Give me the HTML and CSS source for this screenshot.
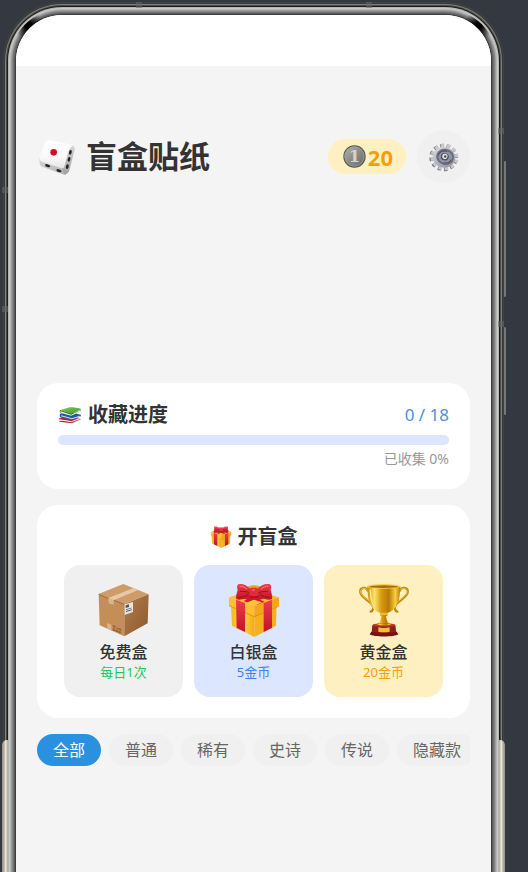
FILE: index.html
```html
<!DOCTYPE html>
<html lang="zh-CN">
<head>
<meta charset="utf-8">
<meta name="viewport" content="width=device-width, initial-scale=1">
<title>盲盒贴纸</title>
<link rel="stylesheet" href="styles.css">
</head>
<body>
<svg class="defs" aria-hidden="true">
  <defs>
    <linearGradient id="gold" x1="0" x2="1" y1="0" y2="0">
      <stop offset="0" stop-color="#f6b51c"/><stop offset=".5" stop-color="#ffd84a"/><stop offset="1" stop-color="#f3a915"/>
    </linearGradient>
    <linearGradient id="cup" x1="0" x2="1" y1="0" y2="0">
      <stop offset="0" stop-color="#c98a09"/><stop offset=".22" stop-color="#ffe36a"/><stop offset=".42" stop-color="#d99a12"/><stop offset=".65" stop-color="#b97a08"/><stop offset=".85" stop-color="#f9cf3d"/><stop offset="1" stop-color="#b87905"/>
    </linearGradient>
    <linearGradient id="red" x1="0" x2="0" y1="0" y2="1">
      <stop offset="0" stop-color="#ee3d4a"/><stop offset="1" stop-color="#c11426"/>
    </linearGradient>
    <linearGradient id="coin" x1="0" x2="1" y1="0" y2="1">
      <stop offset="0" stop-color="#b4b5b0"/><stop offset=".5" stop-color="#8a8b87"/><stop offset="1" stop-color="#6c6d69"/>
    </linearGradient>
    <linearGradient id="steel" x1="0" x2="1" y1="0" y2="1">
      <stop offset="0" stop-color="#dcdce2"/><stop offset="1" stop-color="#90909c"/>
    </linearGradient>
    <linearGradient id="face" x1="0" x2="0" y1="0" y2="1">
      <stop offset="0" stop-color="#fff"/><stop offset=".6" stop-color="#fafafa"/><stop offset="1" stop-color="#e6e6e6"/>
    </linearGradient>
    <linearGradient id="side" x1="0" x2="0" y1="0" y2="1">
      <stop offset="0" stop-color="#d4d4d4"/><stop offset="1" stop-color="#a0a0a0"/>
    </linearGradient>
    <linearGradient id="under" x1="0" x2="1" y1="0" y2="0">
      <stop offset="0" stop-color="#d0d0d0"/><stop offset="1" stop-color="#b4b4b4"/>
    </linearGradient>
    <linearGradient id="carton" x1="0" x2="1" y1="0" y2="1">
      <stop offset="0" stop-color="#b37c4a"/><stop offset="1" stop-color="#8b5a2f"/>
    </linearGradient>
    <linearGradient id="cover" x1="0" x2="1" y1="0" y2="1">
      <stop offset="0" stop-color="#8ccc5b"/><stop offset="1" stop-color="#31912e"/>
    </linearGradient>
    <symbol id="gift" viewBox="114 204 156 162">
      <ellipse cx="192" cy="220" rx="22" ry="9" fill="#e5a51b"/>
      <path fill="#f9bb2e" d="M118 247 190 225 266 247 194 275Z"/>
      <path fill="#ce1729" d="m140 240 20-7 64 27-22 9Zm77-6 23 8-58 24-21-8Z"/>
      <path fill="#ffc536" d="m169 263 22-9 25 8-23 10Z"/>
      <path fill="url(#gold)" d="m123 269 70 26v71l-67-34Z"/>
      <path fill="#f5b01d" d="m260 269-67 26v71l65-34Z"/>
      <path fill="#ffbf2d" d="m117 247 76 27v31l-76-32Z"/>
      <path fill="#f5a51d" d="m267 247-74 27v31l74-32Z"/>
      <path fill="url(#red)" d="m138 254 27 10v87l-25-12Zm108 0-25 10v87l25-13Z"/>
      <path fill="none" stroke="#cc8615" stroke-width="2" d="m118 273 20 8m28 12 27 12 28-12m25-10 20-9"/>
      <path fill="#b80d25" d="m176 236 16-5 16 5-3 12h-24Z"/>
      <path fill="url(#red)" d="M181 222c-12-13-25-17-35-14-6 2-5 10-3 17-3 10-7 23-3 28 11 3 29-1 42-12Z"/>
      <path fill="url(#red)" d="M202 222c12-13 25-17 36-14 7 2 6 10 4 17 3 10 7 23 3 28-12 3-30-1-43-12Z"/>
      <path fill="none" stroke="#98101f" stroke-width="3" d="M150 229c11 0 20 1 29 4m55-4c-11 0-20 1-29 4M145 247c10 0 21-3 31-9m64 9c-10 0-21-3-31-9"/>
      <rect x="178" y="218" width="27" height="26" rx="9" fill="#e02d3d"/>
      <path fill="none" stroke="#ff7b80" stroke-width="3" d="M149 214c8-1 16 3 22 8m64-8c-8-1-16 3-22 8m-27 3h9"/>
    </symbol>
  </defs>
</svg>

<div class="phone">
  <i class="seam seam-top-a"></i><i class="seam seam-top-b"></i>
  <i class="seam seam-left-a"></i><i class="seam seam-left-b"></i>
  <i class="seam seam-right-a"></i><i class="seam seam-right-b"></i>
  <i class="key key-volume"></i><i class="key key-power"></i>
  <i class="trim trim-left"></i><i class="trim trim-right"></i>

  <div class="screen">
    <div class="status-bar"></div>
    <main class="app">
      <header class="header">
        <h1 class="brand">
          <svg class="icon-dice" viewBox="27 41 108 108" aria-hidden="true">
            <path fill="url(#under)" d="M28 98q0 14 2 20 3 6 10 8l54 19q9 4 14 2l2-34Z"/>
            <path fill="url(#side)" d="M106 66q10-5 22-5 8 2 6 12l-15 59q-3 13-14 16-8-4-6-20Z"/>
            <path fill="url(#face)" d="M58 44q-9-2-12 7L29 96q-3 10 6 13l57 19q10 3 12-7l11-42q2-9 12-16-5-5-14-7Z"/>
            <circle cx="71" cy="81" r="10" fill="#cf1027"/>
            <g fill="#242424"><ellipse cx="53" cy="121" rx="8" ry="4" transform="rotate(17 53 121)"/><ellipse cx="87" cy="136" rx="8" ry="4" transform="rotate(17 87 136)"/><ellipse cx="121" cy="81" rx="4" ry="7" transform="rotate(15 121 81)"/><ellipse cx="117" cy="102" rx="4" ry="7" transform="rotate(15 117 102)"/><ellipse cx="112" cy="124" rx="4" ry="7" transform="rotate(15 112 124)"/></g>
          </svg>
          <span class="brand-name">盲盒贴纸</span>
        </h1>
        <div class="tools">
          <div class="coins">
            <svg class="icon-coin" viewBox="68 59 70 70" aria-hidden="true">
              <circle cx="103" cy="94" r="34" fill="#555650"/>
              <circle cx="103" cy="94" r="31" fill="url(#coin)"/>
              <circle cx="103" cy="94" r="29" fill="none" stroke="#9fa09b" stroke-width="2"/>
              <text class="coin-mark" x="103" y="112" text-anchor="middle">1</text>
            </svg>
            <span>20</span>
          </div>
          <button class="settings" type="button" aria-label="设置">
            <svg class="icon-gear" viewBox="327 48 90 90" aria-hidden="true">
              <g transform="rotate(12 373 94)">
                <ellipse cx="371" cy="95" rx="37" ry="35" fill="none" stroke="#77777f" stroke-width="12" stroke-dasharray="10 8.9"/>
                <ellipse cx="373" cy="93" rx="36" ry="34" fill="none" stroke="#c6c6cc" stroke-width="12" stroke-dasharray="10 8.3"/>
                <ellipse cx="372" cy="94" rx="34" ry="31" fill="url(#steel)"/>
                <ellipse cx="375" cy="92" rx="27" ry="24" fill="#686b7e"/>
                <ellipse cx="376" cy="93" rx="21" ry="18" fill="#9194a6"/>
                <path fill="none" stroke="#505365" stroke-width="3" d="M354 91c2-11 12-17 23-16m18 21c-2 9-11 14-21 14"/>
                <ellipse cx="374" cy="92" rx="12" ry="11" fill="#4d5061"/>
                <circle cx="374" cy="91" r="8" fill="#e6e6e9"/>
                <circle cx="375" cy="91" r="4" fill="#4a4b52"/>
              </g>
            </svg>
          </button>
        </div>
      </header>

      <section class="card progress-card">
        <div class="progress-head">
          <h2 class="card-title">
            <svg class="icon-books" viewBox="87 97 69 51" aria-hidden="true">
              <path fill="#b6262d" d="m89 131 18-8 48 10-28 13-37-5-1-3 34 1-34-5Z"/>
              <path fill="#eee" d="m93 135 33 5 24-10v4l-25 9-32-6Z"/>
              <path fill="#2556a7" d="m91 118 22-7 41 9v5l-27 12-36-11Z"/>
              <path fill="#dfe3f2" d="m95 122 32 9 24-8v3l-24 8-32-9Z"/>
              <path fill="#1f6723" d="m90 110 3-5 30 14 31-14-2 5-25 15-34-9Z"/>
              <path fill="#e8f0dc" d="m92 109 33 11 27-13v4l-27 12-31-8Z"/>
              <path fill="url(#cover)" d="m90 107 31-9c13 0 25 2 35 5l-31 15Z"/>
            </svg>
            <span>收藏进度</span>
          </h2>
          <span class="count">0 / 18</span>
        </div>
        <progress class="track" value="0" max="18" aria-label="收藏进度"></progress>
        <p class="percent">已收集 0%</p>
      </section>

      <section class="card open-card">
        <h2 class="card-title centered">
          <svg class="icon-gift-small" aria-hidden="true"><use href="#gift"/></svg>
          <span>开盲盒</span>
        </h2>
        <div class="boxes">
          <button class="box free" type="button">
            <svg class="box-icon" viewBox="129 84 156 162" aria-hidden="true">
              <path fill="#cf9b68" d="m130 117 75-30 76 31-73 29Z"/>
              <path fill="#c58e59" d="m131 118 77 29v97l-74-33Z"/>
              <path fill="url(#carton)" d="m281 118-73 29v97l70-39Z"/>
              <path fill="#e5c8a8" d="m160 129 76-30 14 6-74 31Z"/>
              <path fill="#d9b58d" d="m160 129 16 6v15l-5-3-4 1-6-4Z"/>
              <path fill="#d8b58e" d="m156 204 13 5v17l-12-5Z"/>
              <path fill="none" stroke="#7b4c26" stroke-width="2" d="m131 118 29 12m17 6 31 12"/>
              <path fill="#e7e3df" d="m209 148 25-7v30l-25 9Z"/>
              <path fill="#555" d="m212 151 10-3v8l-10 3Zm1 12 17-5v2l-17 5Zm0 5 17-5v3l-17 5Z"/>
              <path fill="none" stroke="#6f4523" stroke-width="2" d="m173 212 9 3m-5-3v14m9-8v11m-13-5 24 9m-8-13 10 4m-4-1v11"/>
            </svg>
            <span class="box-name">免费盒</span>
            <span class="box-price">每日1次</span>
          </button>
          <button class="box silver" type="button">
            <svg class="box-icon" aria-hidden="true"><use href="#gift"/></svg>
            <span class="box-name">白银盒</span>
            <span class="box-price">5金币</span>
          </button>
          <button class="box golden" type="button">
            <svg class="box-icon" viewBox="114 84 156 162" aria-hidden="true">
              <path fill="none" stroke="#c48810" stroke-width="7" stroke-linecap="round" d="M143 107c-5-13-24-10-22 5 2 15 27 24 36 38 6 9 2 18-5 20M240 107c5-13 25-10 23 5-2 15-27 24-36 38-6 9-2 18 5 20"/>
              <path fill="none" stroke="#f6c83e" stroke-width="3" stroke-linecap="round" d="M142 106c-6-10-21-8-20 6 2 13 27 23 36 37M241 106c6-10 21-8 20 6-2 13-27 23-36 37"/>
              <path fill="url(#cup)" d="M142 94c1 42 7 70 39 80v9h21v-9c31-10 38-38 39-80Z"/>
              <ellipse cx="191" cy="94" rx="50" ry="7" fill="#f5cf52"/>
              <ellipse cx="191" cy="95" rx="43" ry="4" fill="#a46b0b"/>
              <path fill="#ffed92" d="M153 104c2 31 7 51 18 61-15-10-21-31-22-60Z"/>
              <rect x="180" y="173" width="23" height="7" rx="3" fill="#edba2b"/>
              <path fill="url(#cup)" d="M184 181h14c1 17 7 24 19 31h-52c12-7 18-14 19-31Z"/>
              <path fill="#8e2018" d="M157 210q35-10 69 0l3 24H155Z"/>
              <ellipse cx="192" cy="210" rx="34" ry="5" fill="#c2382e"/>
              <path fill="url(#cup)" d="M169 208q23-7 46 0-23 7-46 0Z"/>
              <path fill="#76150f" d="M154 230q38 8 76 0l5 8c-10 9-76 9-86 0Z"/>
              <path fill="#f2bf35" d="M175 217q17 4 34 0v13q-17 3-34 0Z"/>
            </svg>
            <span class="box-name">黄金盒</span>
            <span class="box-price">20金币</span>
          </button>
        </div>
      </section>

      <nav class="filters" aria-label="稀有度">
        <button class="chip active" type="button">全部</button>
        <button class="chip" type="button">普通</button>
        <button class="chip" type="button">稀有</button>
        <button class="chip" type="button">史诗</button>
        <button class="chip" type="button">传说</button>
        <button class="chip" type="button">隐藏款</button>
      </nav>
    </main>
  </div>
</div>
</body>
</html>
```

FILE: styles.css
```css
* {
  box-sizing: border-box;
}

body {
  margin: 0;
  padding: 15px 37px 0 16px;
  background: #343941;
  color: #333;
  font-family: "Noto Sans", "Noto Sans CJK SC", sans-serif;
}

h1,
h2,
p {
  margin: 0;
}

button {
  border: 0;
  padding: 0;
  color: inherit;
  font: inherit;
  cursor: pointer;
}

svg {
  display: block;
  flex: none;
}

.defs {
  position: absolute;
  width: 0;
  height: 0;
}

/* Phone shell: concentric metal rings around the screen */
.phone {
  position: relative;
  display: flex;
  flex-direction: column;
  min-height: calc(100vh - 15px);
  border-radius: 46px 46px 0 0;
  box-shadow:
    0 0 0 1px #3c3c3c,
    0 0 0 2px #5c5c5c,
    0 0 0 3px #707070,
    0 0 0 4px #858585,
    0 0 0 5px #9c9c9c,
    0 0 0 6px #b4b4b4,
    0 0 0 7px #c9c9c9,
    0 0 0 8px #b4b4b2,
    0 0 0 9px #1d1d1d,
    0 0 0 10px #484846,
    0 0 0 11px #80807d,
    0 0 0 12px #393939,
    0 0 0 13px #41423f;
}

/* Dark reflections on the inner bevel of both corners */
.phone::before {
  content: "";
  position: absolute;
  inset: -6px -6px 0;
  border-radius: 52px 52px 0 0;
  background:
    radial-gradient(circle at 18px 16px, #000 3px, transparent 15px),
    radial-gradient(circle at calc(100% - 18px) 16px, #000 3px, transparent 15px);
}

.screen {
  position: relative;
  flex: 1;
  overflow: hidden;
  border-radius: 46px 46px 0 0;
  background: #f4f4f4;
}

.seam {
  position: absolute;
  width: 6px;
  height: 6px;
  background: #666;
  opacity: 0.6;
}

.seam-top-a { top: -13px; left: 120px; }
.seam-top-b { top: -13px; right: 119px; }
.seam-left-a { top: 172px; left: -14px; }
.seam-left-b { top: 291px; left: -14px; }
.seam-right-a { top: 113px; right: -13px; }
.seam-right-b { top: 306px; right: -13px; }

.key {
  position: absolute;
  right: -15px;
  width: 2px;
  border-radius: 1px;
  background: #777;
}

.key-volume { top: 146px; height: 136px; }
.key-power { top: 312px; height: 88px; }

.trim {
  position: absolute;
  top: 725px;
  bottom: 0;
  width: 6px;
}

.trim-left {
  left: -14px;
  border-radius: 5px 0 0 0;
  background: linear-gradient(90deg, #978f83, #b7b0a0 35%, #ece8dc 60%, #aaa596);
}

.trim-right {
  right: -14px;
  border-radius: 0 5px 0 0;
  background: linear-gradient(90deg, #aaa596, #ece8dc 40%, #b7b0a0 65%, #978f83);
}

.status-bar {
  height: 51px;
  background: #fff;
}

.app {
  padding: 64px 21px 0;
}

.header {
  display: flex;
  align-items: center;
  justify-content: space-between;
  margin-bottom: 200px;
}

.brand {
  display: flex;
  align-items: center;
  gap: 11px;
  padding-left: 2px;
  font-size: 31px;
  line-height: 40px;
}

.brand-name {
  padding-bottom: 2px;
}

.icon-dice {
  width: 36px;
  height: 36px;
}

.tools {
  display: flex;
  align-items: center;
  gap: 11px;
}

.coins {
  display: flex;
  align-items: center;
  gap: 2px;
  height: 35px;
  padding: 0 13px 0 15px;
  border-radius: 18px;
  background: #fef0c0;
  color: #f59e0b;
  font-size: 22px;
  font-weight: 700;
  line-height: 34px;
}

.icon-coin {
  width: 23px;
  height: 23px;
}

.coin-mark {
  fill: #d2d3cd;
  font: 700 50px "DejaVu Serif", serif;
}

.settings {
  display: grid;
  place-items: center;
  width: 53px;
  height: 53px;
  border-radius: 50%;
  background: #f0f0f0;
}

.icon-gear {
  width: 30px;
  height: 30px;
}

.card {
  border-radius: 21px;
  background: #fff;
  margin-bottom: 16px;
}

.progress-card {
  padding: 21px 21px 20px;
}

.progress-head {
  display: flex;
  align-items: center;
  justify-content: space-between;
  margin-bottom: 9px;
}

.card-title {
  display: flex;
  align-items: center;
  gap: 6px;
  height: 22px;
  font-size: 20px;
  line-height: 24px;
}

.icon-books {
  width: 24px;
  height: 17px;
}

.icon-gift-small {
  width: 22px;
  height: 22px;
}

.count {
  color: #4a90d9;
  font-size: 17px;
  line-height: 22px;
}

.track {
  display: block;
  width: 100%;
  height: 10px;
  overflow: hidden;
  appearance: none;
  border: 0;
  border-radius: 5px;
  background: #dde6ff;
}

.track::-webkit-progress-bar {
  background: #dde6ff;
}

.track::-webkit-progress-value {
  background: #2991e0;
}

.percent {
  height: 20px;
  margin-top: 4px;
  color: #999;
  font-size: 14px;
  line-height: 20px;
  text-align: right;
}

.open-card {
  padding: 21px 27px;
}

.centered {
  justify-content: center;
  margin-bottom: 17px;
}

.boxes {
  display: grid;
  grid-template-columns: repeat(3, 1fr);
  gap: 11px;
}

.box {
  display: flex;
  flex-direction: column;
  align-items: center;
  padding: 18px 0 15px;
  border-radius: 16px;
}

.free { background: #f0f0f0; }
.silver { background: #dde6ff; }
.golden { background: #fef0c0; }

.box-icon {
  width: 52px;
  height: 54px;
  margin-bottom: 3px;
}

.box-name {
  height: 23px;
  font-size: 16px;
  font-weight: 500;
  line-height: 24px;
}

.box-price {
  height: 19px;
  font-size: 13px;
  line-height: 19px;
}

.free .box-price { color: #22c55e; }
.silver .box-price { color: #3b82f6; }
.golden .box-price { color: #f59e0b; }

.filters {
  display: flex;
  gap: 8px;
  overflow: hidden;
}

.chip {
  flex: none;
  height: 32px;
  padding: 0 16px;
  border-radius: 16px;
  background: #f0f0f0;
  color: #666;
  font-size: 16px;
  line-height: 30px;
}

.active {
  background: #2991e0;
  color: #fff;
}
```
